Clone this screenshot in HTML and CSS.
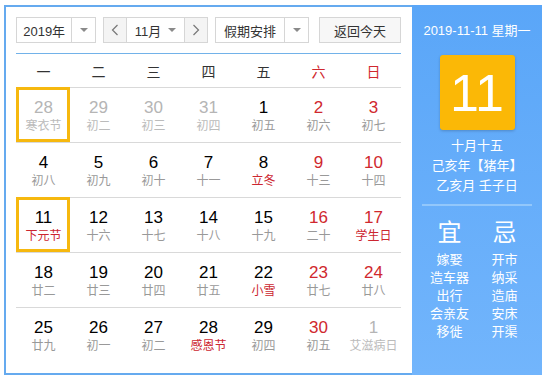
FILE: index.html
```html
<!DOCTYPE html>
<html lang="zh">
<head>
<meta charset="utf-8">
<title>万年历</title>
<link rel="stylesheet" href="styles.css">
</head>
<body>
<div class="cal">
  <div class="main">
    <div class="toolbar">
      <div class="sel year"><span class="val">2019年</span><span class="arr"><i class="tri"></i></span></div>
      <div class="month">
        <span class="nav prev"><svg width="8" height="12" viewBox="0 0 8 12"><polyline points="6.5,1 1.5,6 6.5,11" fill="none" stroke="#777" stroke-width="1.2"/></svg></span>
        <span class="mval">11月<i class="tri"></i></span>
        <span class="nav next"><svg width="8" height="12" viewBox="0 0 8 12"><polyline points="1.5,1 6.5,6 1.5,11" fill="none" stroke="#777" stroke-width="1.2"/></svg></span>
      </div>
      <div class="sel hol"><span class="val">假期安排</span><span class="arr"><i class="tri"></i></span></div>
      <button class="today">返回今天</button>
    </div>
    <div class="grid">
      <div class="week"><span>一</span><span>二</span><span>三</span><span>四</span><span>五</span><span class="we">六</span><span class="we">日</span></div>
      <div class="row">
        <div class="cell other box"><span class="n">28</span><span class="l">寒衣节</span></div>
        <div class="cell other"><span class="n">29</span><span class="l">初二</span></div>
        <div class="cell other"><span class="n">30</span><span class="l">初三</span></div>
        <div class="cell other"><span class="n">31</span><span class="l">初四</span></div>
        <div class="cell"><span class="n">1</span><span class="l">初五</span></div>
        <div class="cell we"><span class="n">2</span><span class="l">初六</span></div>
        <div class="cell we"><span class="n">3</span><span class="l">初七</span></div>
      </div>
      <div class="row">
        <div class="cell"><span class="n">4</span><span class="l">初八</span></div>
        <div class="cell"><span class="n">5</span><span class="l">初九</span></div>
        <div class="cell"><span class="n">6</span><span class="l">初十</span></div>
        <div class="cell"><span class="n">7</span><span class="l">十一</span></div>
        <div class="cell"><span class="n">8</span><span class="l fest">立冬</span></div>
        <div class="cell we"><span class="n">9</span><span class="l">十三</span></div>
        <div class="cell we"><span class="n">10</span><span class="l">十四</span></div>
      </div>
      <div class="row">
        <div class="cell box"><span class="n">11</span><span class="l fest">下元节</span></div>
        <div class="cell"><span class="n">12</span><span class="l">十六</span></div>
        <div class="cell"><span class="n">13</span><span class="l">十七</span></div>
        <div class="cell"><span class="n">14</span><span class="l">十八</span></div>
        <div class="cell"><span class="n">15</span><span class="l">十九</span></div>
        <div class="cell we"><span class="n">16</span><span class="l">二十</span></div>
        <div class="cell we"><span class="n">17</span><span class="l fest">学生日</span></div>
      </div>
      <div class="row">
        <div class="cell"><span class="n">18</span><span class="l">廿二</span></div>
        <div class="cell"><span class="n">19</span><span class="l">廿三</span></div>
        <div class="cell"><span class="n">20</span><span class="l">廿四</span></div>
        <div class="cell"><span class="n">21</span><span class="l">廿五</span></div>
        <div class="cell"><span class="n">22</span><span class="l fest">小雪</span></div>
        <div class="cell we"><span class="n">23</span><span class="l">廿七</span></div>
        <div class="cell we"><span class="n">24</span><span class="l">廿八</span></div>
      </div>
      <div class="row">
        <div class="cell"><span class="n">25</span><span class="l">廿九</span></div>
        <div class="cell"><span class="n">26</span><span class="l">初一</span></div>
        <div class="cell"><span class="n">27</span><span class="l">初二</span></div>
        <div class="cell"><span class="n">28</span><span class="l fest">感恩节</span></div>
        <div class="cell"><span class="n">29</span><span class="l">初四</span></div>
        <div class="cell we"><span class="n">30</span><span class="l">初五</span></div>
        <div class="cell other"><span class="n">1</span><span class="l">艾滋病日</span></div>
      </div>
    </div>
  </div>
  <aside class="panel">
    <div class="pdate">2019-11-11 星期一</div>
    <div class="big">11</div>
    <div class="lunar">十月十五<br>己亥年【猪年】<br>乙亥月 壬子日</div>
    <div class="hr"></div>
    <div class="yj">
      <div class="col">
        <div class="head">宜</div>
        <ul class="list"><li>嫁娶</li><li>造车器</li><li>出行</li><li>会亲友</li><li>移徙</li></ul>
      </div>
      <div class="col">
        <div class="head">忌</div>
        <ul class="list"><li>开市</li><li>纳采</li><li>造庙</li><li>安床</li><li>开渠</li></ul>
      </div>
    </div>
  </aside>
</div>
</body>
</html>
```

FILE: styles.css
```css
html, body {
  margin: 0;
  padding: 0;
  background: #fff;
}
body {
  font-family: "Liberation Sans", "Noto Sans CJK SC", sans-serif;
  color: #333;
}
.cal {
  display: flex;
  margin: 5px 0 0 4px;
  width: 538px;
  height: 370px;
  box-sizing: border-box;
  border: 2px solid #65aaef;
  border-right: 0;
}
.main {
  width: 406px;
  padding: 10px 0 0 10px;
  box-sizing: border-box;
}
.toolbar {
  display: flex;
  height: 26px;
}
.sel {
  display: flex;
  height: 26px;
  box-sizing: border-box;
  border: 1px solid #d6d6d6;
  background: #fff;
}
.val {
  display: flex;
  align-items: center;
  justify-content: center;
  font-size: 13px;
  color: #333;
}
.arr {
  width: 23px;
  border-left: 1px solid #d6d6d6;
  display: flex;
  align-items: center;
  justify-content: center;
}
.tri {
  display: inline-block;
  width: 0;
  height: 0;
  border-left: 4px solid transparent;
  border-right: 4px solid transparent;
  border-top: 4px solid #8a8a8a;
}
.year { width: 80px; }
.year .val { width: 55px; }
.hol { width: 94px; margin-left: 7px; }
.hol .val { width: 69px; }
.month {
  display: flex;
  width: 105px;
  height: 26px;
  box-sizing: border-box;
  margin-left: 7px;
  border: 1px solid #d6d6d6;
}
.nav {
  width: 22px;
  background: #f4f4f4;
  display: flex;
  align-items: center;
  justify-content: center;
}
.prev { border-right: 1px solid #d6d6d6; }
.next { border-left: 1px solid #d6d6d6; }
.mval {
  flex: 1;
  display: flex;
  align-items: center;
  justify-content: center;
  gap: 7px;
  font-size: 13px;
  color: #333;
}
.today {
  margin-left: 10px;
  width: 82px;
  height: 26px;
  padding: 0;
  border: 1px solid #d6d6d6;
  background: #f7f7f7;
  font-family: "Liberation Sans", "Noto Sans CJK SC", sans-serif;
  font-size: 13px;
  color: #333;
}
.grid {
  width: 385px;
  margin-top: 10px;
  border-top: 1px solid #72b2e9;
}
.week {
  display: grid;
  grid-template-columns: repeat(7, 55px);
  height: 33px;
  align-items: center;
  text-align: center;
  font-size: 14px;
  color: #333;
}
.week .we { color: #d0282e; }
.row {
  display: grid;
  grid-template-columns: repeat(7, 55px);
  height: 55px;
  box-sizing: border-box;
  border-top: 1px solid #d9d9d9;
}
.cell {
  position: relative;
  text-align: center;
  padding-top: 10px;
}
.n {
  display: block;
  font-size: 17px;
  line-height: 20px;
  color: #000;
}
.l {
  display: block;
  font-size: 12px;
  line-height: 16px;
  color: #999;
}
.cell.we .n { color: #d0282e; }
.l.fest { color: #cc2630; }
.cell.other .n { color: #b5b5b5; }
.cell.other .l { color: #bbb; }
.box::after {
  content: "";
  position: absolute;
  left: 0;
  top: -1px;
  width: 54px;
  height: 55px;
  box-sizing: border-box;
  border: 3px solid #f6b80f;
}
.panel {
  width: 130px;
  margin: -2px 0;
  background: linear-gradient(#5aa6f8, #72b5fc);
  color: #fff;
  display: flex;
  flex-direction: column;
  align-items: center;
  padding-top: 17px;
  box-sizing: border-box;
}
.pdate {
  font-size: 13px;
  line-height: 18px;
}
.big {
  width: 75px;
  height: 75px;
  margin-top: 15px;
  background: #fbb806;
  border-radius: 3px;
  box-shadow: 0 1px 3px rgba(0, 0, 0, 0.2);
  display: flex;
  align-items: center;
  justify-content: center;
  font-size: 52px;
  line-height: 1;
}
.lunar {
  margin-top: 6px;
  font-size: 13px;
  line-height: 20px;
  text-align: center;
}
.hr {
  width: 110px;
  height: 2px;
  margin-top: 8px;
  background: #92c7fb;
}
.yj {
  display: grid;
  grid-template-columns: 55px 55px;
  margin-top: 13px;
  text-align: center;
}
.head {
  font-size: 24px;
  line-height: 28px;
}
.list {
  list-style: none;
  margin: 4px 0 0;
  padding: 0;
  font-size: 13px;
  line-height: 18px;
}
```
